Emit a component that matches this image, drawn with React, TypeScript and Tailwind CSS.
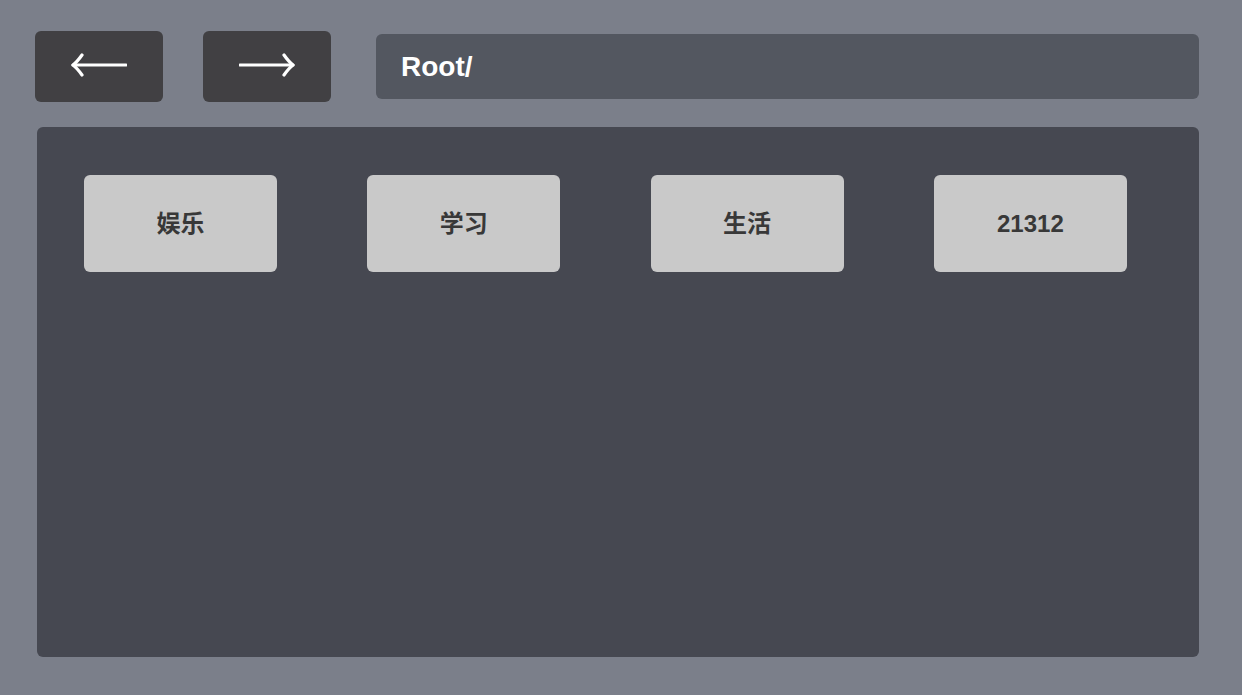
import React from "react";

function Arrow({ dir }: { dir: "left" | "right" }) {
    return (
        <svg width="56" height="24" viewBox="0 0 56 24" fill="none" stroke="white" strokeWidth="3.2" strokeLinecap="round" strokeLinejoin="round">
            {dir === "left" ? (
                <>
                    <path d="M2 12 H55" />
                    <path d="M11 2 Q6 9 2 12 Q6 15 11 22" />
                </>
            ) : (
                <>
                    <path d="M1 12 H54" />
                    <path d="M45 2 Q50 9 54 12 Q50 15 45 22" />
                </>
            )}
        </svg>
    );
}

export default function App() {
    const folders = ["娱乐", "学习", "生活", "21312"];

    return (
        <div
            className="w-[1242px] h-[695px] bg-[#7b7f8a] pt-[31px] pl-[35px] pr-[43px] flex flex-col"
            style={{ fontFamily: '"Liberation Sans", Arial, "Noto Sans CJK SC", sans-serif' }}
        >
            <div className="flex items-center h-[71px]">
                <button className="w-[128px] h-[71px] rounded-md bg-[#414043] flex items-center justify-center pb-[3px]">
                    <Arrow dir="left" />
                </button>
                <button className="w-[128px] h-[71px] rounded-md bg-[#414043] flex items-center justify-center ml-[40px] pb-[3px]">
                    <Arrow dir="right" />
                </button>
                <div className="flex-1 h-[65px] ml-[45px] rounded-md bg-[#535760] flex items-center pl-[25px]">
                    <span className="text-white font-bold text-[28px]">Root/</span>
                </div>
            </div>

            <div className="mt-[25px] ml-[2px] h-[530px] rounded-md bg-[#464851] pt-[48px] pl-[47px]">
                <div className="flex gap-[90.3px]">
                    {folders.map((name) => (
                        <div
                            key={name}
                            className="w-[193px] h-[97px] rounded-md bg-[#c9c9c9] flex items-center justify-center text-[#383838] font-bold text-[24px]"
                        >
                            {name}
                        </div>
                    ))}
                </div>
            </div>
        </div>
    );
}
